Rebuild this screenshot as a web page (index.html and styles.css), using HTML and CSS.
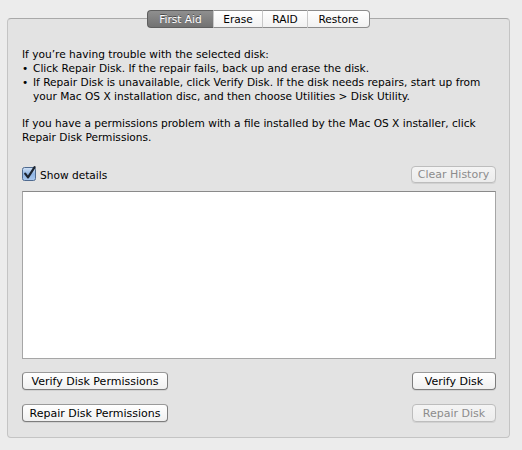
FILE: index.html
```html
<!DOCTYPE html>
<html lang="en">
<head>
    <meta charset="UTF-8">
    <title>Disk Utility - First Aid</title>
    <link rel="stylesheet" href="styles.css">
</head>
<body>
    <div class="window">
        <div class="tabs">
            <span class="tab selected">First Aid</span>
            <span class="tab">Erase</span>
            <span class="tab">RAID</span>
            <span class="tab">Restore</span>
        </div>
        <div class="panel">
            <p class="intro">If you’re having trouble with the selected disk:</p>
            <ul class="tips">
                <li>Click Repair Disk. If the repair fails, back up and erase the disk.</li>
                <li>If Repair Disk is unavailable, click Verify Disk. If the disk needs repairs, start up from your Mac OS X installation disc, and then choose Utilities &gt; Disk Utility.</li>
            </ul>
            <p class="perm">If you have a permissions problem with a file installed by the Mac OS X installer, click Repair Disk Permissions.</p>

            <div class="row details-row">
                <label class="check">
                    <svg width="15" height="15" viewBox="0 0 15 15">
                        <defs>
                            <linearGradient id="cb" x1="0" y1="0" x2="0" y2="1">
                                <stop offset="0" stop-color="#d3e3f6"/>
                                <stop offset="0.5" stop-color="#8fb4e3"/>
                                <stop offset="1" stop-color="#a9c8ef"/>
                            </linearGradient>
                        </defs>
                        <rect x="0.5" y="1.5" width="13" height="13" rx="2" fill="url(#cb)" stroke="#4f6a8f"/>
                        <path d="M3.2 7.6 L6 11.4 L12.6 1.2" fill="none" stroke="#1c2430" stroke-width="2.2" stroke-linecap="round" stroke-linejoin="round"/>
                    </svg>
                    Show details
                </label>
                <button class="btn disabled clear">Clear History</button>
            </div>

            <div class="log"></div>

            <div class="row btn-row">
                <button class="btn wide">Verify Disk Permissions</button>
                <button class="btn narrow">Verify Disk</button>
            </div>
            <div class="row btn-row">
                <button class="btn wide">Repair Disk Permissions</button>
                <button class="btn narrow disabled">Repair Disk</button>
            </div>
        </div>
    </div>
</body>
</html>
```

FILE: styles.css
```css
body {
    margin: 0;
    background-color: #ececec;
    font-family: "DejaVu Sans", "Open Sans", sans-serif;
    font-size: 10.6px;
    color: #000;
}

.window {
    padding: 10px 12px 0 7px;
}

.tabs {
    display: flex;
    justify-content: center;
    position: relative;
    z-index: 1;
    height: 18px;
}

.tab {
    height: 16px;
    line-height: 16px;
    padding: 0 9px;
    background: linear-gradient(#ffffff, #f1f1f1);
    border-top: 1px solid #8c8c8c;
    border-bottom: 1px solid #8c8c8c;
    border-left: 1px solid #c8c8c8;
    text-align: center;
}

.tab:first-child {
    border-left: 1px solid #7a7a7a;
    border-radius: 4px 0 0 4px;
    width: 47px;
}

.tab:last-child {
    border-right: 1px solid #8c8c8c;
    border-radius: 0 4px 4px 0;
    width: 43px;
}

.tab:nth-child(2) {
    width: 30px;
}

.tab:nth-child(3) {
    width: 26px;
}

.tab.selected {
    background: linear-gradient(#8f8f8f, #727272);
    border-color: #5e5e5e;
    color: #fff;
    text-shadow: 0 -1px 0 #4a4a4a;
}

.panel {
    margin-top: -10px;
    background-color: #e3e3e3;
    border: 1px solid #c4c4c4;
    border-top-color: #a9a9a9;
    border-radius: 4px;
    padding: 28px 13px 15px 14px;
}

p,
ul {
    margin: 0;
    line-height: 14px;
}

.tips {
    list-style: none;
    padding: 0;
}

.tips li {
    position: relative;
    padding-left: 11px;
}

.tips li::before {
    content: "•";
    position: absolute;
    left: 0;
}

.perm {
    margin-top: 13px;
    padding-right: 10px;
}

.row {
    display: flex;
    justify-content: space-between;
    align-items: center;
}

.details-row {
    margin-top: 22px;
    height: 17px;
}

.check {
    display: flex;
    align-items: center;
    gap: 3px;
}

.check svg {
    margin-top: -2px;
}

.btn {
    font-family: inherit;
    font-size: 11px;
    color: #000;
    height: 18px;
    padding: 0;
    background: linear-gradient(#ffffff, #f0f0f0);
    border: 1px solid #7d7d7d;
    border-top-color: #9a9a9a;
    border-radius: 4px;
    box-shadow: 0 1px 0 rgba(0, 0, 0, 0.08);
}

.btn.disabled {
    color: #8c8c8c;
    border-color: #bdbdbd;
    background: linear-gradient(#f4f4f4, #ececec);
}

.clear {
    width: 85px;
    height: 17px;
}

.log {
    margin-top: 8px;
    height: 166px;
    background-color: #fff;
    border: 1px solid #a6a6a6;
    border-top-color: #8a8a8a;
}

.btn-row {
    margin-top: 13px;
}

.btn-row + .btn-row {
    margin-top: 14px;
}

.wide {
    width: 146px;
}

.narrow {
    width: 84px;
}
```
